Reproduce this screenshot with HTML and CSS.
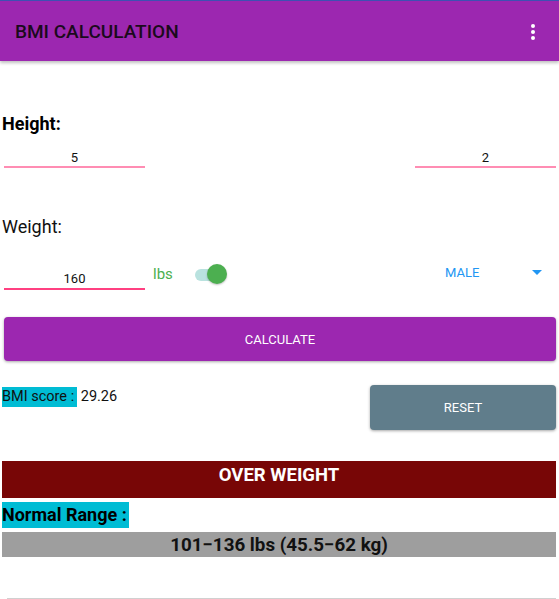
FILE: index.html
```html
<!DOCTYPE html>
<html>
<head>
<meta charset="utf-8">
<link rel="stylesheet" href="styles.css">
</head>
<body>
<div class="status"></div>
<header class="appbar">
  <div class="title">BMI CALCULATION</div>
  <div class="menu"><span></span><span></span><span></span></div>
</header>
<main class="content">
  <div class="label-bold">Height:</div>
  <div class="height-row">
    <div class="field light">5</div>
    <div class="field light">2</div>
  </div>
  <div class="label">Weight:</div>
  <div class="weight-row">
    <div class="field strong">160</div>
    <div class="lbs">lbs</div>
    <div class="switch"><div class="track"></div><div class="thumb"></div></div>
    <div class="spinner"><span class="spin-text">MALE</span><span class="arrow"></span></div>
  </div>
  <button class="btn calc">CALCULATE</button>
  <div class="score-row">
    <div class="score"><span class="hl">BMI score :</span> 29.26</div>
    <button class="btn reset">RESET</button>
  </div>
  <div class="status-bar">OVER WEIGHT</div>
  <div class="range-label"><span class="hl">Normal Range :</span></div>
  <div class="range">101−136 lbs (45.5−62 kg)</div>
  <div class="bottom-line"></div>
</main>
</body>
</html>
```
FILE: styles.css
```css
html, body {
  margin: 0;
  padding: 0;
  background: #ffffff;
  font-family: Roboto, "Liberation Sans", sans-serif;
  color: #000;
  width: 559px;
  height: 599px;
  overflow: hidden;
}
.status {
  height: 1px;
  background: #3f51b5;
}
.appbar {
  height: 60px;
  background: #9c27b0;
  display: flex;
  align-items: center;
  justify-content: space-between;
  padding: 0 25px 0 15px;
  box-shadow: 0 2px 3px rgba(0,0,0,0.25);
  position: relative;
}
.title {
  font-size: 19px;
  font-weight: 500;
  color: #1b0a1c;
  margin-top: 0;
}
.menu {
  display: flex;
  flex-direction: column;
  gap: 2px;
  margin-top: 1px;
  margin-right: -1px;
}
.menu span {
  width: 4px;
  height: 4px;
  border-radius: 50%;
  background: #fff;
}
.content {
  padding: 0 3px 0 2px;
}
.label-bold {
  font-size: 18px;
  font-weight: 700;
  margin-top: 52px;
  line-height: 22px;
}
.height-row {
  display: flex;
  justify-content: space-between;
  padding: 0 0 0 2px;
  margin-top: 14px;
}
.field {
  width: 141px;
  text-align: center;
  font-size: 13px;
  line-height: 18px;
  color: #111;
}
.field.light {
  line-height: 17px;
  border-bottom: 2px solid #ff8db3;
}
.field.strong {
  border-bottom: 2px solid #ff4081;
}
.label {
  font-size: 18px;
  line-height: 22px;
  margin-top: 48px;
  color: #111;
}
.weight-row {
  display: flex;
  align-items: flex-start;
  margin-top: 22px;
  padding-left: 2px;
}
.weight-row .field {
  margin-top: 10px;
}
.lbs {
  color: #4caf50;
  font-size: 15px;
  margin-left: 8px;
  line-height: 18px;
  margin-top: 5px;
}
.switch {
  position: relative;
  width: 38px;
  height: 22px;
  margin-left: 22px;
  margin-top: 3px;
}
.track {
  position: absolute;
  left: 0;
  top: 6px;
  width: 30px;
  height: 12px;
  border-radius: 6px;
  background: #b9e2df;
}
.thumb {
  position: absolute;
  left: 12px;
  top: 1px;
  width: 20px;
  height: 20px;
  border-radius: 50%;
  background: #4caf50;
  box-shadow: 0 1px 2px rgba(0,0,0,0.25);
}
.spinner {
  display: flex;
  align-items: center;
  justify-content: space-between;
  margin-left: auto;
  width: 97px;
  padding-right: 14px;
  margin-top: 3px;
  height: 18px;
}
.spin-text {
  color: #2196f3;
  font-size: 13px;
}
.arrow {
  width: 0;
  height: 0;
  border-left: 5px solid transparent;
  border-right: 5px solid transparent;
  border-top: 5px solid #2196f3;
  margin-top: 1px;
}
.btn {
  display: block;
  border: none;
  border-radius: 4px;
  color: #fff;
  font-family: Roboto, "Liberation Sans", sans-serif;
  font-size: 13px;
  box-shadow: 0 1px 3px rgba(0,0,0,0.35);
  padding: 0;
}
.calc {
  width: 552px;
  height: 44px;
  margin: 27px 0 0 2px;
  background: #9c27b0;
}
.score-row {
  display: flex;
  justify-content: space-between;
  align-items: flex-start;
  margin-top: 24px;
}
.score {
  font-size: 14.5px;
  line-height: 20px;
  color: #111;
  margin-top: 2px;
}
.hl {
  background: #00bcd4;
}
.score .hl {
  display: inline-block;
  padding-right: 3px;
}
.reset {
  width: 186px;
  height: 45px;
  background: #607d8b;
}
.status-bar {
  margin-top: 31px;
  height: 37px;
  background: #780606;
  color: #fff;
  font-weight: 700;
  font-size: 18.5px;
  text-align: center;
  line-height: 28px;
  width: 554px;
}
.range-label {
  margin-top: 4px;
  font-size: 18px;
  font-weight: 700;
  line-height: 26px;
  height: 26px;
}
.range-label .hl {
  display: inline-block;
  padding-right: 2px;
}
.range {
  margin-top: 4px;
  background: #9e9e9e;
  height: 25px;
  width: 554px;
  text-align: center;
  font-weight: 700;
  font-size: 18.8px;
  line-height: 26px;
  color: #111;
}
.bottom-line {
  margin: 41px 0 0 5px;
  height: 1px;
  width: 549px;
  background: #d0d0d0;
}
```
